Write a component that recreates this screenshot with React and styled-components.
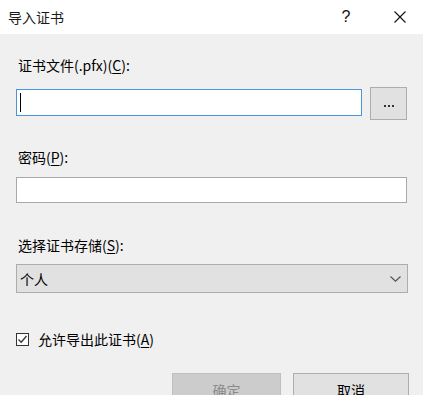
import React from "react";
import styled, { createGlobalStyle } from "styled-components";

const Global = createGlobalStyle`
  html, body { margin: 0; padding: 0; background: #f0f0f0; }
  body { font-family: "Noto Sans CJK SC", "Noto Sans", "Liberation Sans", sans-serif; }
  * { box-sizing: border-box; }
`;

const Dialog = styled.div`
  width: 423px;
  height: 395px;
  overflow: hidden;
  background: #f0f0f0;
  display: flex;
  flex-direction: column;
  font-size: 14px;
  color: #000;
`;

const TitleBar = styled.div`
  height: 34px;
  background: #fff;
  display: flex;
  align-items: center;
  padding-left: 8px;
  flex-shrink: 0;
`;

const Title = styled.div`
  flex: 1;
  font-size: 14px;
  line-height: 20px;
  color: #1a1a1a;
`;

const TitleButton = styled.div`
  width: ${(p) => p.$w}px;
  height: 34px;
  padding-left: ${(p) => p.$pl || 0}px;
  display: flex;
  align-items: center;
  justify-content: center;
  font-family: "Liberation Sans", sans-serif;
  font-size: 16px;
  color: #111;
`;

const Body = styled.div`
  display: flex;
  flex-direction: column;
  padding: 0 16px 0 16px;
`;

const Label = styled.div`
  height: 20px;
  line-height: 20px;
  padding-left: 2px;
  margin-top: ${(p) => p.$mt}px;
  white-space: nowrap;
`;

const U = styled.span`
  text-decoration: underline;
  text-underline-offset: 2px;
`;

const FileRow = styled.div`
  display: flex;
  align-items: flex-start;
  gap: 8px;
  margin-top: 12px;
`;

const TextBox = styled.div`
  position: relative;
  flex: 1;
  height: ${(p) => p.$h}px;
  margin-top: ${(p) => p.$mt || 0}px;
  background: #fff;
  border: 1px solid ${(p) => (p.$focus ? "#4a96de" : "#a9a9a9")};
`;

const Caret = styled.div`
  position: absolute;
  left: 3px;
  top: 3px;
  width: 1px;
  height: 19px;
  background: #000;
`;

const BrowseButton = styled.div`
  width: 37px;
  height: 33px;
  background: #e1e1e1;
  border: 1px solid #adadad;
  display: flex;
  align-items: center;
  justify-content: center;
  gap: 2px;
  padding-top: 4px;
`;

const Dot = styled.span`
  width: 2px;
  height: 2px;
  background: #333;
`;

const Select = styled.div`
  height: 29px;
  margin-top: 9px;
  margin-right: -1px;
  background: #e1e1e1;
  border: 1px solid #adadad;
  display: flex;
  align-items: center;
  justify-content: space-between;
  padding: 0 6px 0 3px;
  line-height: 20px;
`;

const CheckRow = styled.label`
  display: flex;
  align-items: center;
  gap: 9px;
  height: 20px;
  margin-top: 36px;
  line-height: 20px;
`;

const CheckBox = styled.span`
  width: 13px;
  height: 13px;
  border: 1px solid #333;
  background: #fff;
  display: flex;
  align-items: center;
  justify-content: center;
`;

const ButtonRow = styled.div`
  display: flex;
  justify-content: flex-end;
  gap: 12px;
  margin-top: 24px;
  margin-right: -2px;
`;

const Button = styled.div`
  width: ${(p) => p.$w}px;
  height: 33px;
  display: flex;
  align-items: center;
  justify-content: center;
  background: ${(p) => (p.$disabled ? "#cccccc" : "#e1e1e1")};
  border: 1px solid ${(p) => (p.$disabled ? "#bfbfbf" : "#adadad")};
  color: ${(p) => (p.$disabled ? "#8a8a8a" : "#000")};
  line-height: 20px;
`;

export default function App() {
  return (
    <>
      <Global />
      <Dialog>
        <TitleBar>
          <Title>导入证书</Title>
          <TitleButton $w={46}>?</TitleButton>
          <TitleButton $w={54} $pl={8}>
            <svg width="12" height="12" viewBox="0 0 12 12">
              <path d="M0.5 0.5 L11.5 11.5 M11.5 0.5 L0.5 11.5" stroke="#111" strokeWidth="1.1" fill="none" />
            </svg>
          </TitleButton>
        </TitleBar>
        <Body>
          <Label $mt={21}>
            证书文件(.pfx)(<U>C</U>):
          </Label>
          <FileRow>
            <TextBox $h={27} $mt={2} $focus>
              <Caret />
            </TextBox>
            <BrowseButton>
              <Dot />
              <Dot />
              <Dot />
            </BrowseButton>
          </FileRow>
          <Label $mt={27}>
            密码(<U>P</U>):
          </Label>
          <TextBox $h={26} $mt={10} style={{ flex: "none" }} />
          <Label $mt={32}>
            选择证书存储(<U>S</U>):
          </Label>
          <Select>
            <span>个人</span>
            <svg width="11" height="6" viewBox="0 0 11 6">
              <path d="M0.5 0.5 L5.5 5.2 L10.5 0.5" stroke="#555" strokeWidth="1.2" fill="none" />
            </svg>
          </Select>
          <CheckRow>
            <CheckBox>
              <svg width="11" height="11" viewBox="0 0 11 11">
                <path d="M1.5 5.5 L4.2 8.2 L9.5 2" stroke="#333" strokeWidth="1.3" fill="none" />
              </svg>
            </CheckBox>
            <span>
              允许导出此证书(<U>A</U>)
            </span>
          </CheckRow>
          <ButtonRow>
            <Button $w={109} $disabled>
              确定
            </Button>
            <Button $w={116}>取消</Button>
          </ButtonRow>
        </Body>
      </Dialog>
    </>
  );
}
